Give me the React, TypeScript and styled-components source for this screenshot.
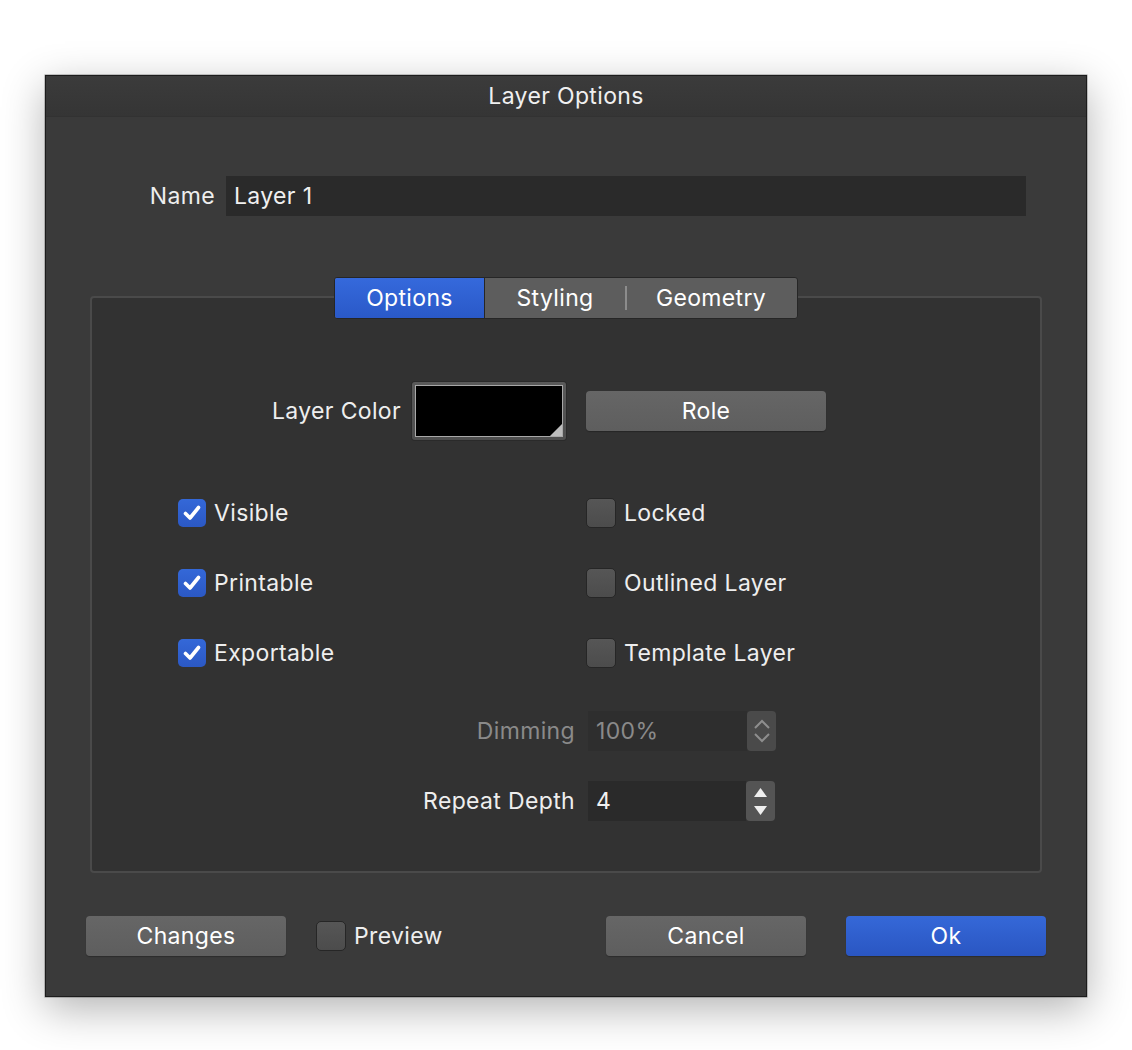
import React from "react";
import styled, { createGlobalStyle } from "styled-components";

const GlobalStyle = createGlobalStyle`
    html, body {
        margin: 0;
        background: #ffffff;
    }
    body {
        font-family: Inter, "Noto Sans", "Liberation Sans", sans-serif;
        -webkit-font-smoothing: antialiased;
    }
`;

const Page = styled.div`
    width: 1132px;
    height: 1050px;
    padding: 75px 0 0 45px;
    box-sizing: border-box;
`;

const Dialog = styled.div`
    width: 1042px;
    height: 922px;
    box-sizing: border-box;
    background: #3a3a3a;
    border: 1px solid #1c1c1c;
    box-shadow: 0 12px 40px rgba(0, 0, 0, 0.3), 0 0 0 0.5px rgba(0, 0, 0, 0.4);
    display: flex;
    flex-direction: column;
    color: #eeeeee;
    font-size: 23px;
    letter-spacing: 0.35px;
`;

const TitleBar = styled.div`
    height: 40px;
    flex-shrink: 0;
    display: flex;
    align-items: center;
    justify-content: center;
    background: linear-gradient(#3b3b3b, #353535);
    border-bottom: 1px solid #323232;
    color: #f0f0f0;
`;

const Body = styled.div`
    flex: 1;
    display: flex;
    flex-direction: column;
    padding: 59px 40px 0 40px;
`;

const NameRow = styled.div`
    display: flex;
    align-items: center;
    justify-content: flex-end;
    gap: 11px;
    padding-right: 20px;
`;

const TextField = styled.div<{ $width: number; $disabled?: boolean }>`
    width: ${(p) => p.$width}px;
    height: 40px;
    box-sizing: border-box;
    padding-left: 8px;
    display: flex;
    align-items: center;
    background: ${(p) => (p.$disabled ? "#2e2e2e" : "#2a2a2a")};
    color: ${(p) => (p.$disabled ? "#8a8a8a" : "#f0f0f0")};
`;

const GroupWrap = styled.div`
    margin: 61px 4px 0 4px;
    height: 596px;
    padding-top: 19px;
    box-sizing: border-box;
    display: flex;
`;

const GroupBox = styled.div`
    flex: 1;
    border: 2px solid #4a4a4a;
    border-radius: 4px;
    background: #323232;
    display: flex;
    flex-direction: column;
`;

const TabBar = styled.div`
    align-self: center;
    margin-top: -21px;
    display: flex;
    height: 40px;
    border: 1px solid #262626;
    border-radius: 3px;
    overflow: hidden;
    background: #5d5d5d;
`;

const Tab = styled.div<{ $active?: boolean; $width: number; $divider?: boolean }>`
    width: ${(p) => p.$width}px;
    display: flex;
    align-items: center;
    justify-content: center;
    position: relative;
    color: #ffffff;
    background: ${(p) => (p.$active ? "linear-gradient(#3569dc, #2a59c8)" : "transparent")};
    border-right: ${(p) => (p.$active ? "1px solid #262626" : "none")};
    &::before {
        content: "";
        display: ${(p) => (p.$divider ? "block" : "none")};
        position: absolute;
        left: 0;
        top: 8px;
        bottom: 8px;
        width: 2px;
        background: #8c8c8c;
    }
`;

const Grid = styled.div`
    display: grid;
    grid-template-columns: 494px 1fr;
    align-items: center;
`;

const ColorRow = styled(Grid)`
    margin-top: 63px;
`;

const ColorCell = styled.div`
    display: flex;
    align-items: center;
    justify-content: flex-end;
    gap: 11px;
    padding-right: 20px;
`;

const Swatch = styled.div`
    width: 154px;
    height: 58px;
    box-sizing: border-box;
    padding: 3px;
    border-radius: 3px;
    background: linear-gradient(#5a5a5a, #4e4e4e);
    box-shadow: 0 0 0 1px #2a2a2a;
`;

const SwatchInner = styled.div`
    width: 100%;
    height: 100%;
    box-sizing: border-box;
    background: #000000;
    border: 1px solid #a8a8a8;
    position: relative;
    &::after {
        content: "";
        position: absolute;
        right: 0;
        bottom: 0;
        border-style: solid;
        border-width: 0 0 12px 12px;
        border-color: transparent transparent #bdbdbd transparent;
    }
`;

const PushButton = styled.div<{ $primary?: boolean; $width: number }>`
    width: ${(p) => p.$width}px;
    height: 40px;
    box-sizing: border-box;
    border-radius: 4px;
    display: flex;
    align-items: center;
    justify-content: center;
    color: #ffffff;
    background: ${(p) =>
        p.$primary ? "linear-gradient(#3568d8, #2a56c2)" : "linear-gradient(#666666, #5e5e5e)"};
    box-shadow: 0 1px 1px rgba(0, 0, 0, 0.25);
`;

const CheckRows = styled.div`
    margin-top: 38px;
    display: flex;
    flex-direction: column;
`;

const CheckRow = styled(Grid)`
    height: 70px;
`;

const CheckItem = styled.label<{ $indent?: number }>`
    display: flex;
    align-items: center;
    gap: 8px;
    padding-left: ${(p) => p.$indent ?? 0}px;
`;

const Box = styled.span<{ $checked?: boolean }>`
    width: ${(p) => (p.$checked ? 28 : 30)}px;
    height: ${(p) => (p.$checked ? 28 : 30)}px;
    box-sizing: border-box;
    border-radius: 5px;
    display: flex;
    align-items: center;
    justify-content: center;
    background: ${(p) => (p.$checked ? "linear-gradient(#3468d8, #2b58c4)" : "linear-gradient(#565656, #4c4c4c)")};
    border: ${(p) => (p.$checked ? "none" : "1px solid #262626")};
`;

const FieldRows = styled.div`
    margin-top: 23px;
    display: flex;
    flex-direction: column;
    gap: 30px;
`;

const FieldLabel = styled.div<{ $disabled?: boolean }>`
    text-align: right;
    padding-right: 11px;
    color: ${(p) => (p.$disabled ? "#8a8a8a" : "#eeeeee")};
`;

const FieldCell = styled.div`
    display: flex;
    align-items: center;
    padding-left: 2px;
`;

const Stepper = styled.div<{ $disabled?: boolean }>`
    width: 29px;
    height: 40px;
    box-sizing: border-box;
    border-radius: 4px;
    display: flex;
    flex-direction: column;
    align-items: center;
    justify-content: center;
    gap: ${(p) => (p.$disabled ? 4 : 9)}px;
    background: ${(p) => (p.$disabled ? "#4a4a4a" : "#545454")};
`;

const Footer = styled.div`
    margin-top: 43px;
    display: flex;
    align-items: center;
`;

const PreviewItem = styled(CheckItem)`
    margin-left: 30px;
    flex: 1;
`;

const FooterRight = styled.div`
    display: flex;
    gap: 40px;
`;

const CheckMark = () => (
    <svg width="18" height="16" viewBox="0 0 18 16">
        <path d="M2.5 8.5 L7 13 L15.5 2.5" fill="none" stroke="#ffffff" strokeWidth="3.6" strokeLinecap="round" strokeLinejoin="round" />
    </svg>
);

const Checkbox = ({ checked }: { checked?: boolean }) => (
    <Box $checked={checked}>{checked && <CheckMark />}</Box>
);

const ChevronArrows = () => (
    <>
        <svg width="18" height="10" viewBox="0 0 18 10">
            <path d="M2 9 L9 2 L16 9" fill="none" stroke="#8e8e8e" strokeWidth="2" />
        </svg>
        <svg width="18" height="10" viewBox="0 0 18 10">
            <path d="M2 1 L9 8 L16 1" fill="none" stroke="#8e8e8e" strokeWidth="2" />
        </svg>
    </>
);

const TriangleArrows = () => (
    <>
        <svg width="13" height="9" viewBox="0 0 13 9">
            <path d="M6.5 0 L13 9 L0 9 Z" fill="#eeeeee" />
        </svg>
        <svg width="13" height="9" viewBox="0 0 13 9">
            <path d="M0 0 L13 0 L6.5 9 Z" fill="#eeeeee" />
        </svg>
    </>
);

const leftChecks = [
    { label: "Visible", checked: true },
    { label: "Printable", checked: true },
    { label: "Exportable", checked: true },
];

const rightChecks = ["Locked", "Outlined Layer", "Template Layer"];

const App = () => (
    <>
        <GlobalStyle />
        <Page>
            <Dialog>
                <TitleBar>Layer Options</TitleBar>
                <Body>
                    <NameRow>
                        <span>Name</span>
                        <TextField $width={800}>Layer 1</TextField>
                    </NameRow>

                    <GroupWrap>
                        <GroupBox>
                            <TabBar>
                                <Tab $active $width={149}>Options</Tab>
                                <Tab $width={140}>Styling</Tab>
                                <Tab $width={172} $divider>Geometry</Tab>
                            </TabBar>

                            <ColorRow>
                                <ColorCell>
                                    <span>Layer Color</span>
                                    <Swatch>
                                        <SwatchInner />
                                    </Swatch>
                                </ColorCell>
                                <PushButton $width={240}>Role</PushButton>
                            </ColorRow>

                            <CheckRows>
                                {leftChecks.map((c, i) => (
                                    <CheckRow key={c.label}>
                                        <CheckItem $indent={86}>
                                            <Checkbox checked={c.checked} />
                                            {c.label}
                                        </CheckItem>
                                        <CheckItem>
                                            <Checkbox />
                                            {rightChecks[i]}
                                        </CheckItem>
                                    </CheckRow>
                                ))}
                            </CheckRows>

                            <FieldRows>
                                <Grid>
                                    <FieldLabel $disabled>Dimming</FieldLabel>
                                    <FieldCell>
                                        <TextField $width={159} $disabled>100%</TextField>
                                        <Stepper $disabled>
                                            <ChevronArrows />
                                        </Stepper>
                                    </FieldCell>
                                </Grid>
                                <Grid>
                                    <FieldLabel>Repeat Depth</FieldLabel>
                                    <FieldCell>
                                        <TextField $width={158}>4</TextField>
                                        <Stepper>
                                            <TriangleArrows />
                                        </Stepper>
                                    </FieldCell>
                                </Grid>
                            </FieldRows>
                        </GroupBox>
                    </GroupWrap>

                    <Footer>
                        <PushButton $width={200}>Changes</PushButton>
                        <PreviewItem>
                            <Checkbox />
                            Preview
                        </PreviewItem>
                        <FooterRight>
                            <PushButton $width={200}>Cancel</PushButton>
                            <PushButton $width={200} $primary>Ok</PushButton>
                        </FooterRight>
                    </Footer>
                </Body>
            </Dialog>
        </Page>
    </>
);

export default App;
